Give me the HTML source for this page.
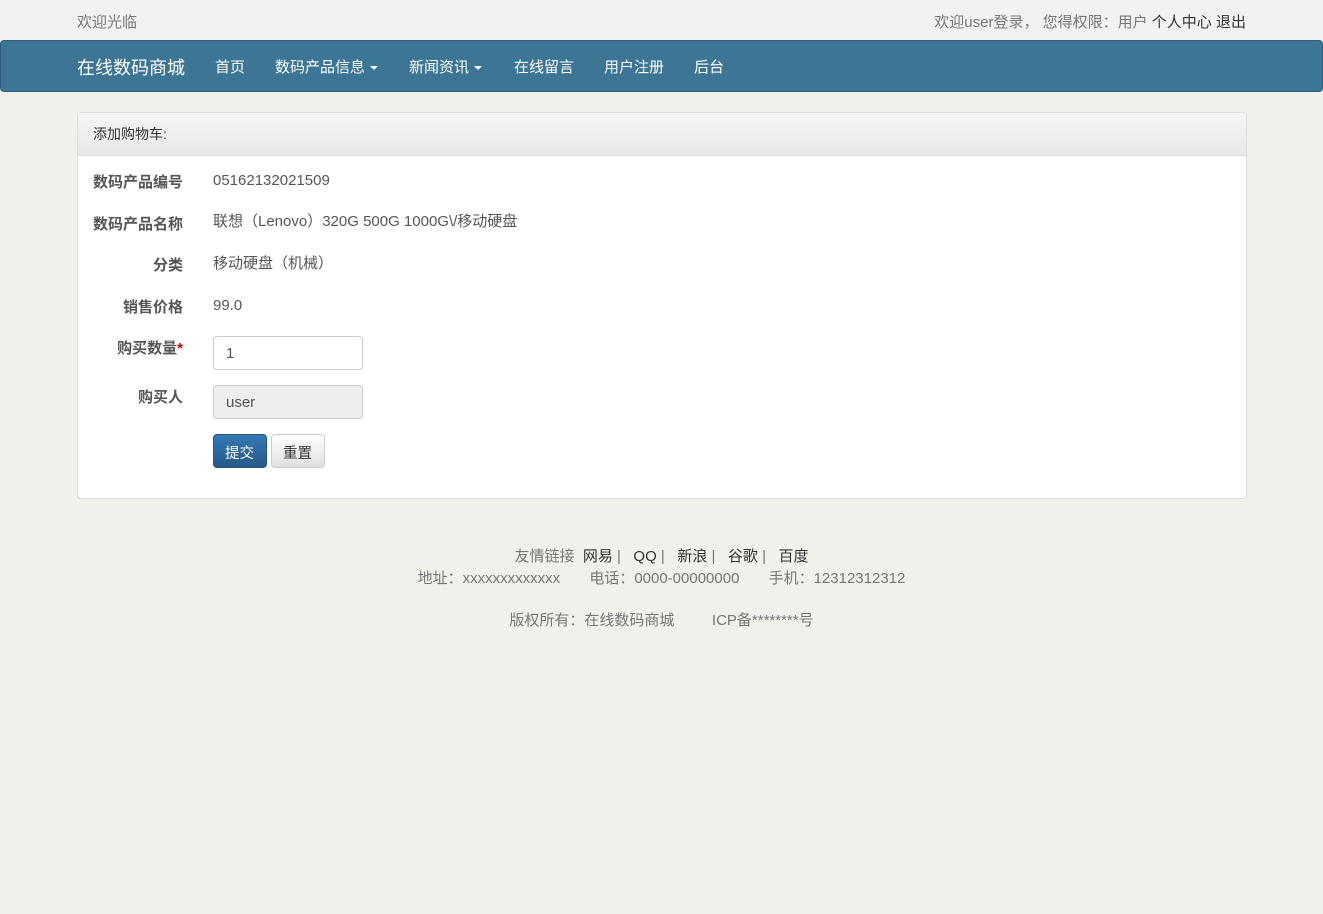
<!DOCTYPE html>
<html><head><meta charset="utf-8"><style>
*{box-sizing:border-box;margin:0;padding:0}
body{width:1323px;height:914px;background:#f1f0ea;font-family:"Liberation Sans","Noto Sans CJK SC",sans-serif;font-size:15px;color:#555;position:relative;overflow:hidden}
.top{position:absolute;left:0;top:0;width:1323px;height:40px;background:#f2f2f2}
.a{position:absolute;white-space:nowrap}
.nav{position:absolute;left:0;top:40px;width:1323px;height:52px;background:#3d7695;border:1px solid #2e5f7c;border-radius:4px}
.nav .a{color:#fff;top:15px;font-size:15px}
.caret{display:inline-block;border-top:4px solid #fff;border-left:4px solid transparent;border-right:4px solid transparent;vertical-align:middle;margin-left:5px}
.panel{position:absolute;left:77px;top:112px;width:1170px;height:387px;background:#fff;border:1px solid #ddd;border-radius:4px}
.ph{height:43px;background:linear-gradient(#f5f5f5,#e8e8e8);border-bottom:1px solid #ddd;padding:11px 15px;color:#333;font-size:14px}
.lbl{font-weight:bold;color:#555;text-align:right;width:105px;left:0;font-size:15px}
.v{left:135px;line-height:20px}
.inp{position:absolute;left:135px;width:150px;height:34px;border:1px solid #ccc;border-radius:4px;padding:7px 12px;color:#555;line-height:20px}
.btn{position:absolute;top:321px;height:34px;border-radius:4px;padding:7px 11px;font-size:14.5px}
.foot{position:absolute;left:0;width:1323px;text-align:center;color:#777;font-size:15px}
.foot b{font-weight:normal;color:#333}
</style></head><body>
<div class="top"><span class="a" style="left:77px;top:11px;color:#777">欢迎光临</span>
<span class="a" style="right:77px;top:11px;color:#777">欢迎user登录， 您得权限：用户 <span style="color:#333">个人中心</span> <span style="color:#333">退出</span></span></div>
<div class="nav">
<span class="a" style="left:76px;top:13px;font-size:18px">在线数码商城</span>
<span class="a" style="left:214px">首页</span>
<span class="a" style="left:274px">数码产品信息<span class="caret"></span></span>
<span class="a" style="left:408px">新闻资讯<span class="caret"></span></span>
<span class="a" style="left:513px">在线留言</span>
<span class="a" style="left:603px">用户注册</span>
<span class="a" style="left:693px">后台</span>
</div>
<div class="panel">
<div class="ph">添加购物车:</div>
<span class="a lbl" style="top:58px">数码产品编号</span><span class="a v" style="top:58px">05162132021509</span>
<span class="a lbl" style="top:100px">数码产品名称</span><span class="a v" style="top:99px">联想（Lenovo）320G 500G 1000G\/移动硬盘</span>
<span class="a lbl" style="top:141px">分类</span><span class="a v" style="top:141px">移动硬盘（机械）</span>
<span class="a lbl" style="top:183px">销售价格</span><span class="a v" style="top:183px">99.0</span>
<span class="a lbl" style="top:224px">购买数量<span style="color:#c00">*</span></span>
<div class="inp" style="top:223px">1</div>
<span class="a lbl" style="top:273px">购买人</span>
<div class="inp" style="top:272px;background:#eee">user</div>
<div class="btn" style="left:135px;width:54px;background:linear-gradient(#337ab7,#265a88);color:#fff;border:1px solid #245580">提交</div>
<div class="btn" style="left:193px;width:54px;background:linear-gradient(#fff,#e0e0e0);color:#333;border:1px solid #ccc">重置</div>
</div>
<div class="foot" style="top:545px">友情链接 &nbsp;<b>网易</b> | &nbsp; <b>QQ</b> | &nbsp; <b>新浪</b> | &nbsp; <b>谷歌</b> | &nbsp; <b>百度</b></div>
<div class="foot" style="top:567px">地址：xxxxxxxxxxxxx &nbsp; &nbsp; &nbsp; 电话：0000-00000000 &nbsp; &nbsp; &nbsp; 手机：12312312312</div>
<div class="foot" style="top:609px">版权所有：在线数码商城 &nbsp; &nbsp; &nbsp; &nbsp; ICP备********号</div>
</body></html>
